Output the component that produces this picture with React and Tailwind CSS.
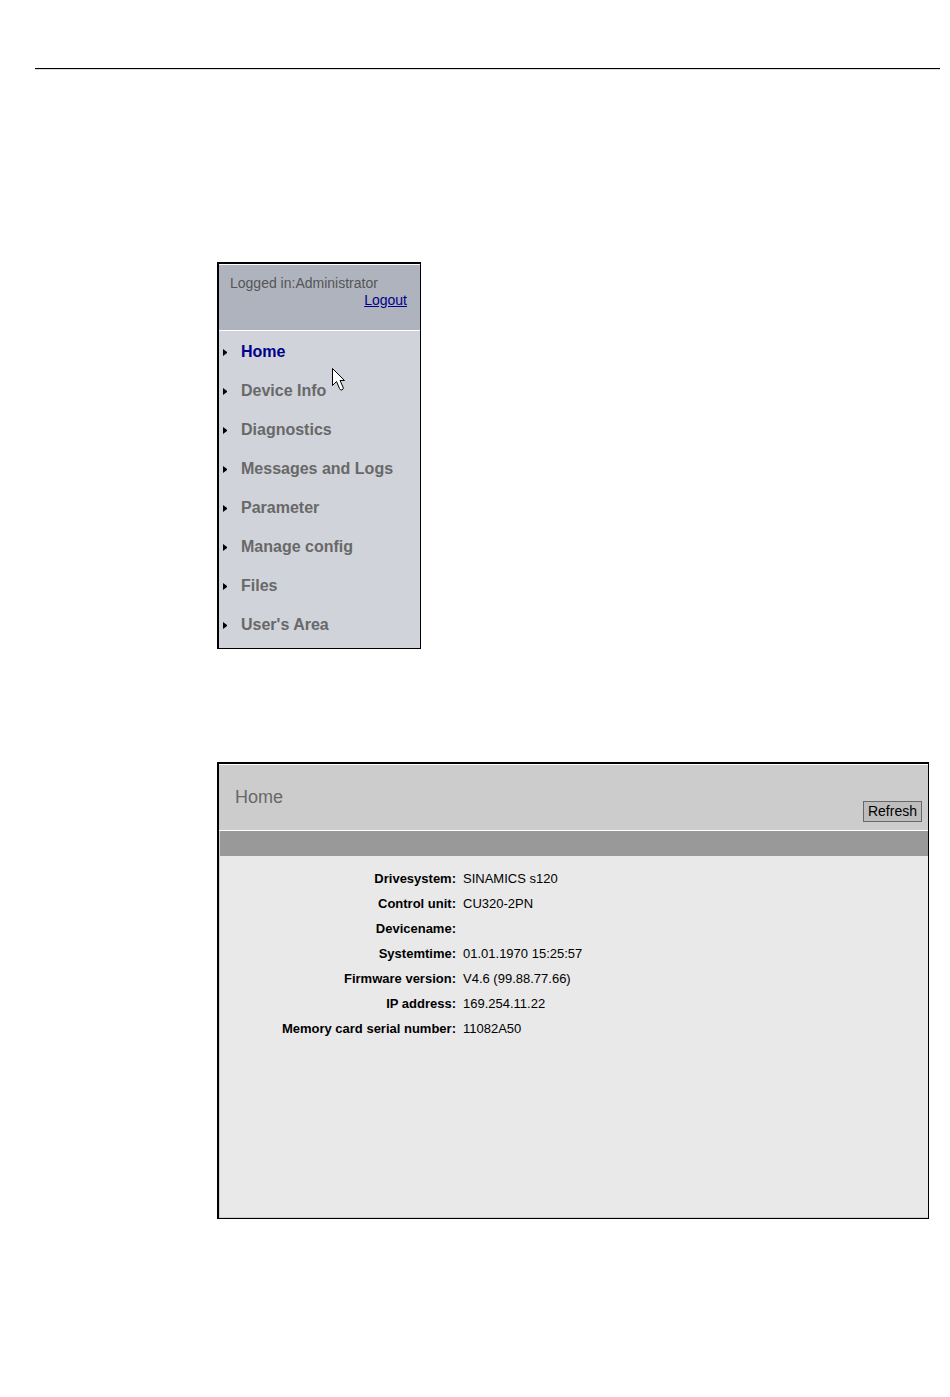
import React from "react";

const navItems = [
  "Home",
  "Device Info",
  "Diagnostics",
  "Messages and Logs",
  "Parameter",
  "Manage config",
  "Files",
  "User's Area",
];

const deviceRows = [
  ["Drivesystem:", "SINAMICS s120"],
  ["Control unit:", "CU320-2PN"],
  ["Devicename:", ""],
  ["Systemtime:", "01.01.1970 15:25:57"],
  ["Firmware version:", "V4.6 (99.88.77.66)"],
  ["IP address:", "169.254.11.22"],
  ["Memory card serial number:", "11082A50"],
];

const Cursor = () => (
  <svg
    className="absolute left-[113px] top-[37px]"
    width="13"
    height="23"
    viewBox="0 0 13 23"
    aria-hidden="true"
  >
    <path
      d="M0.5 0.5V17.5L4.5 13.5L7.5 20.5Q8.5 22.5 10 22Q12 21 11 19L8 12.5H12.5Z"
      fill="#fff"
      stroke="#000"
    />
  </svg>
);

const Sidebar = () => (
  <aside className="w-51 border-t-2 border-l-2 border-r border-b border-black bg-[#d0d3da]">
    <div className="h-[67px] border-y border-white bg-[#afb3be] pl-[11px] pr-[13px] pt-2.5 text-sm leading-[17px] text-[#555]">
      <p>Logged in:Administrator</p>
      <p className="text-right">
        <a href="#logout" className="text-[#000088] underline">
          Logout
        </a>
      </p>
    </div>
    <nav className="relative pt-px pb-1">
      <ul>
        {navItems.map((item, i) => (
          <li key={item}>
            <a
              href="#"
              className={`flex h-[39px] items-center pl-1 text-base font-bold ${
                i === 0 ? "text-[#000088]" : "text-[#686868]"
              }`}
            >
              <svg
                className="mr-[14px] mt-0.5"
                width="4"
                height="7"
                viewBox="0 0 4 7"
                aria-hidden="true"
              >
                <path d="M0 0L4 3V4L0 7Z" fill="#000" />
              </svg>
              {item}
            </a>
          </li>
        ))}
      </ul>
      <Cursor />
    </nav>
  </aside>
);

const HomePanel = () => (
  <section className="border-t-2 border-l-2 border-r border-b border-black">
    <header className="flex h-[67px] items-start justify-between border-y border-white bg-[#cccccc] pl-4 pr-1.5">
      <h1 className="mt-[19px] text-lg leading-[26px] text-[#686868]">Home</h1>
      <button
        type="button"
        className="mt-9 h-[21px] border border-[#686868] bg-[#bdbdbd] px-1 text-sm leading-[19px] text-black"
      >
        Refresh
      </button>
    </header>
    <div className="border-l border-b border-[#cccccc] bg-[#e9e9e9]">
      <div className="h-[25px] bg-[#999999]" />
      <div className="min-h-[361px] pt-2.5">
        <table className="text-[13px] leading-[25px] text-black">
          <tbody>
            {deviceRows.map(([label, value]) => (
              <tr key={label}>
                <th scope="row" className="w-[236px] p-0 text-right font-bold">
                  {label}
                </th>
                <td className="py-0 pl-[7px] pr-0">{value}</td>
              </tr>
            ))}
          </tbody>
        </table>
      </div>
    </div>
  </section>
);

export default function App() {
  return (
    <div className="min-h-screen bg-white pt-[68px] pb-10 pl-[35px] pr-2.5 font-['Liberation_Sans',Arial,sans-serif]">
      <hr className="h-0.5 border-t border-black bg-[#dddddd]" />
      <main className="pl-[182px] pr-[11px] pt-48">
        <Sidebar />
        <div className="pt-[113px]">
          <HomePanel />
        </div>
      </main>
    </div>
  );
}
